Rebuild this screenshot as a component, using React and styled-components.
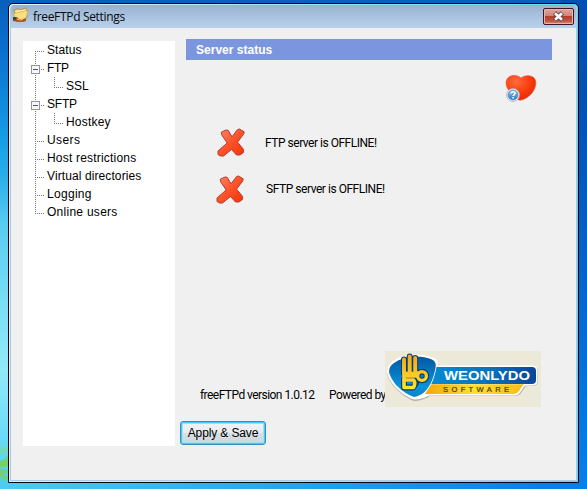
import React from "react";
import styled, { createGlobalStyle } from "styled-components";

const GlobalStyle = createGlobalStyle`
  * { box-sizing: border-box; }
  html, body { margin: 0; padding: 0; overflow: hidden; }
`;

const Desktop = styled.main`
  position: relative;
  width: 587px;
  height: 489px;
  padding: 3px 0 0 8px;
  overflow: hidden;
  background:
    linear-gradient(to right, transparent 0 560px, #0050b4 561px) 0 0 / 100% 60px no-repeat,
    linear-gradient(to bottom, #0651ac 0, #0253b5 110px, #0367cf 290px, #0581ea 489px) 100% 0 / 12px 100% no-repeat,
    linear-gradient(to right, transparent 0, #0582e9 540px) 0 100% / 100% 7px no-repeat,
    linear-gradient(to bottom, #0860bd 0, #0b6fcd 50px, #1599e2 130px, #28aee9 175px, #59ccf1 225px, #7cdff6 310px, #91e9f8 370px, #6edcf7 430px, #4accf5 489px);
`;

const Leaves = styled.svg`
  position: absolute;
  left: 0;
  top: 438px;
`;

const Window = styled.section`
  position: relative;
  width: 571px;
  height: 480px;
  border: 1px solid #05080d;
  border-radius: 5px 5px 0 0;
  background: linear-gradient(to right, #e4f3fb, #64d5ef);
  padding: 1px;
`;

const Frame = styled.div`
  height: 476px;
  border: 1px solid #a9caeb;
  border-top: 0;
  border-radius: 4px 4px 0 0;
  background: #f0f0f0;
  overflow: hidden;
`;

const TitleBar = styled.header`
  height: 23px;
  display: flex;
  align-items: flex-start;
  padding: 2px 2px 0 1px;
  background: linear-gradient(#97b2d0, #a7c1dd 45%, #b9d1ea);
`;

const Title = styled.h1`
  flex: 1;
  margin: 2px 0 0 4px;
  font: 12px/16px "Open Sans", "Noto Sans", sans-serif;
  letter-spacing: -0.33px;
  color: #080808;
`;

const CloseButton = styled.button`
  width: 31px;
  height: 17px;
  margin-top: 1px;
  padding: 0;
  display: grid;
  place-items: center;
  border: 1px solid #431422;
  border-radius: 2px;
  background: linear-gradient(#dfa69d 0, #cf8277 48%, #b43f2d 50%, #bd4f3c 75%, #d58b75);
  box-shadow: inset 0 0 0 1px #e6b5ad;
`;

const Body = styled.div`
  display: flex;
  padding: 13px 24px 0 12px;
`;

const Tree = styled.nav`
  width: 152px;
  height: 405px;
  padding-left: 8px;
  background: #fff;
`;

const TreeRow = styled.div`
  height: 18px;
  display: flex;
`;

const TreeLabel = styled.span`
  font: 12px/18px "Liberation Sans", Arial, sans-serif;
  letter-spacing: ${(p) => p.$track || 0}px;
  color: #000;
  white-space: nowrap;
`;

const Panel = styled.section`
  width: 366px;
  margin-left: 11px;
`;

const Heading = styled.h2`
  height: 21px;
  margin: -2px 0 0;
  padding-left: 10px;
  background: #7b96df;
  color: #fff;
  font: bold 12px/22px "Liberation Sans", Arial, sans-serif;
  letter-spacing: 0.02px;
`;

const HeartRow = styled.div`
  height: 68px;
  display: flex;
  justify-content: flex-end;
  padding: 14px 15px 0 0;
`;

const StatusRow = styled.div`
  height: 47px;
  display: flex;
  padding-left: ${(p) => p.$indent}px;
`;

const SmallText = styled.span`
  display: block;
  width: ${(p) => p.$width}px;
  margin-left: ${(p) => p.$left || 0}px;
  margin-top: ${(p) => p.$top || 0}px;
  flex: none;
  font: 12px/14px Roboto, "Liberation Sans", sans-serif;
  letter-spacing: ${(p) => p.$track || 0}px;
  white-space: nowrap;
  color: #000;
`;

const Footer = styled.footer`
  height: 56px;
  margin-top: 129px;
  display: flex;
  padding-left: 14px;
`;

const Banner = styled.div`
  width: 156px;
  height: 56px;
  flex: none;
  background: #ece9d8;
`;

const ApplyButton = styled.button`
  display: block;
  width: 86px;
  height: 24px;
  margin: 14px 0 0 -6px;
  padding: 0;
  border: 1px solid #3c8fc0;
  border-radius: 3px;
  background: linear-gradient(#f1f4f6 0, #e8ecef 48%, #d6dfe4 52%, #cdd8de 100%);
  box-shadow: inset 0 0 0 1px #3fcbf7, inset 0 0 0 2px #a9def0;
  font: 12px/20px "Liberation Sans", Arial, sans-serif;
  letter-spacing: -0.12px;
  color: #000;
`;

const dots = { stroke: "#777", strokeWidth: 1, strokeDasharray: "1 1" };

function Branch({ kind, first, last }) {
  const child = kind === "child";
  const box = kind === "box";
  return (
    <svg width={child ? 35 : 16} height="18" shapeRendering="crispEdges">
      {!last && <path d={`M4.5 ${first ? 10 : 0}V18`} {...dots} />}
      {last && <path d="M4.5 0V11" {...dots} />}
      {child ? (
        <path d="M23.5 0V10M23 10.5H33" {...dots} />
      ) : (
        <path d="M4 10.5H14" {...dots} />
      )}
      {box && (
        <g>
          <rect x="0.5" y="6.5" width="8" height="8" rx="1" fill="#f7f7f7" stroke="#959595" />
          <path d="M2 10.5H7" stroke="#4055a2" />
        </g>
      )}
    </svg>
  );
}

const nodes = [
  { label: "Status", kind: "leaf", track: 0.1 },
  { label: "FTP", kind: "box", track: -0.3 },
  { label: "SSL", kind: "child", track: 0 },
  { label: "SFTP", kind: "box", track: -0.2 },
  { label: "Hostkey", kind: "child", track: 0.2 },
  { label: "Users", kind: "leaf", track: 0.4 },
  { label: "Host restrictions", kind: "leaf", track: 0.2 },
  { label: "Virtual directories", kind: "leaf", track: 0.1 },
  { label: "Logging", kind: "leaf", track: 0.3 },
  { label: "Online users", kind: "leaf", track: 0.27 },
];

function FolderIcon() {
  return (
    <svg width="17" height="17" viewBox="0 0 17 17">
      <path d="M2 3L6 1.5L8 3L14 .8L15 11L4 14Z" fill="#efc954" stroke="#a17c22" strokeWidth=".7" />
      <path d="M3 4L14 2.2L14 4L4 6Z" fill="#fff6c0" />
      <path d="M1.5 6.5L12 4L16 3.5L14 12L4 14Z" fill="#f9df7d" stroke="#c79b36" strokeWidth=".6" />
      <path d="M1 10H5L7 12H11L14 11V14L11 15H6L1 14Z" fill="#a75724" />
      <path d="M1 10H4V13H1Z" fill="#4d4034" />
      <path d="M5 12L8 13L11 12.5" stroke="#edbc87" fill="none" />
    </svg>
  );
}

function CloseIcon() {
  return (
    <svg width="13" height="11" viewBox="0 0 13 11">
      <path d="M2.6 1.9L10.4 9.1M10.4 1.9L2.6 9.1" stroke="#55434c" strokeWidth="4.6" />
      <path d="M3 2.3L10 8.7M10 2.3L3 8.7" stroke="#f7f7f7" strokeWidth="2.8" />
    </svg>
  );
}

function HeartIcon() {
  return (
    <svg width="32" height="29" viewBox="0 0 32 29">
      <defs>
        <radialGradient id="heart" cx=".35" cy=".25" r=".85">
          <stop offset="0" stopColor="#ff6b3d" />
          <stop offset=".55" stopColor="#fa3b0e" />
          <stop offset="1" stopColor="#df2500" />
        </radialGradient>
        <linearGradient id="help" x2="0" y2="1">
          <stop stopColor="#8cc1ed" />
          <stop offset="1" stopColor="#317bc4" />
        </linearGradient>
      </defs>
      <path d="M16 4.2C13.5 1 6.5 .5 3.4 3.4C-.2 7 .8 12 3.5 16C7 20.5 11 25 15 26.3C20 25.6 24 22.5 27 19C30.5 14.5 32 8.5 29.6 4.6C27 .6 18.8 1 16 4.2Z" fill="url(#heart)" stroke="#e4482a" strokeWidth=".6" />
      <circle cx="8" cy="21" r="6.5" fill="#f0f3f7" stroke="#a5a9af" strokeWidth=".7" />
      <circle cx="8" cy="21" r="5" fill="url(#help)" stroke="#3777b6" strokeWidth=".5" />
      <path d="M6 19.6C6 17 10.1 17.1 10.1 19.3C10.1 20.8 8.1 20.7 8.1 22" fill="none" stroke="#fff" strokeWidth="1.5" />
      <path d="M7.3 23H8.9V24.4H7.3Z" fill="#fff" />
    </svg>
  );
}

function CrossIcon() {
  return (
    <svg width="28" height="29" viewBox="0 0 28 29">
      <defs>
        <linearGradient id="cross" x2="1" y2="1">
          <stop stopColor="#ff8a68" />
          <stop offset=".5" stopColor="#fc5329" />
          <stop offset="1" stopColor="#f03205" />
        </linearGradient>
      </defs>
      <path d="M4.3 4.2L9 2L11.2 2.3L15 8.8L20.6 1.5L22.5 1L27.2 3.8L26.8 5.8L20.6 14.2L26.6 21.5L26.4 24.5L23 27H19.5L14.5 21.5L6.5 28H3.5L1 26.5V23L10.2 15L4.8 7Z" fill="url(#cross)" stroke="#b63b31" strokeWidth="1" strokeLinejoin="round" />
    </svg>
  );
}

function Logo() {
  return (
    <svg width="156" height="56" viewBox="0 0 156 56">
      <defs>
        <linearGradient id="blue"><stop stopColor="#078bd3" /><stop offset=".55" stopColor="#0873bd" /><stop offset="1" stopColor="#0b4698" /></linearGradient>
        <linearGradient id="shield" x2="0" y2="1"><stop stopColor="#0756a2" /><stop offset=".75" stopColor="#0795dc" /><stop offset="1" stopColor="#0784c8" /></linearGradient>
        <linearGradient id="gold"><stop stopColor="#f2a900" /><stop offset=".5" stopColor="#ffdf35" /><stop offset="1" stopColor="#f6bc16" /></linearGradient>
        <linearGradient id="hand" gradientUnits="userSpaceOnUse" x1="0" y1="4" x2="0" y2="38"><stop stopColor="#f5a51c" /><stop offset="1" stopColor="#ffe62a" /></linearGradient>
      </defs>
      <path d="M8 11Q17 5 27 4.5Q40 4 49 8Q54 10 53.5 15H148Q153 15 153 20V30Q153 35 147 35H141L136 42Q134 45 129 45H45Q37 50 29 50Q20 47 10 37Q3 29 2 22Q2 15 8 11Z" fill="#8e91a0" opacity=".65" />
      <path d="M8 10Q17 4 27 3.5Q40 3 49 7Q54 9 53 14.5H148Q152.5 14.5 152.5 19V29.5Q152.5 34.5 147 34.5H140L135.5 41Q133 44.5 129 44.5H44Q37 48.5 29 48.5Q20 46 10 36Q3 28 2 21Q2 14 8 10Z" fill="#fff" />
      <path d="M48 16H147Q151 16 151 20V29Q151 33 147 33H44Z" fill="url(#blue)" />
      <path d="M46 33.2H139Q136 36 134 40Q132 43 129 43H40Z" fill="url(#gold)" />
      <path d="M9 12Q18 6 28 5.5Q39 5 47 8.5Q52 11 50.5 17Q48 30 43 37Q37 45 29 46Q20 43 11 34Q5 26 4 21Q4 15 9 12Z" fill="url(#shield)" stroke="#fff" strokeWidth="1.6" paintOrder="stroke" />
      <g stroke="#073f72" fill="none" strokeLinejoin="round" strokeLinecap="round">
        <path d="M19 22V8.5M24.7 22V5.5M30.2 22V7" strokeWidth="6" />
        <path d="M19 22H30L33 22M19 28H28L31 32L28 36.5H19Z" strokeWidth="6" />
        <circle cx="37" cy="25" r="4.5" strokeWidth="5.5" />
      </g>
      <g stroke="url(#hand)" fill="none" strokeLinejoin="round" strokeLinecap="round">
        <path d="M19.01 22L19 8.5M24.71 22L24.7 5.5M30.21 22L30.2 7" strokeWidth="3.9" />
        <path d="M19 22.2L30 22.6L33 22M19 29H28.5Q31 32 28.5 36.5H19Z" strokeWidth="3.6" />
        <path d="M19 23L19.01 29" strokeWidth="3.6" />
        <path d="M20 25L32 25.01" strokeWidth="3.6" />
        <circle cx="37" cy="25" r="4.4" strokeWidth="3.4" />
      </g>
      <text x="59" y="29" textLength="86" lengthAdjust="spacingAndGlyphs" fontFamily="Liberation Sans, sans-serif" fontWeight="700" fontSize="12" fill="#fff">WEONLYDO</text>
      <text x="58" y="41" textLength="66" lengthAdjust="spacing" fontFamily="Liberation Sans, sans-serif" fontSize="7.5" fill="#493917" stroke="#493917" strokeWidth=".2">SOFTWARE</text>
    </svg>
  );
}

export default function App() {
  return (
    <Desktop>
      <GlobalStyle />
      <Leaves width="8" height="46" viewBox="0 0 8 46">
        <path d="M0 6L2 10L3 6L4 12L8 7V13L3 17L0 14Z" fill="#7fdb8e" opacity=".6" />
        <path d="M0 23L5 21L8 17V27L5 29H0ZM0 31H8V35L3 35L8 39V43L4 39L5 46L1 38L0 40Z" fill="#78cf62" opacity=".9" />
      </Leaves>
      <Window>
        <Frame>
          <TitleBar>
            <FolderIcon />
            <Title>freeFTPd Settings</Title>
            <CloseButton aria-label="Close"><CloseIcon /></CloseButton>
          </TitleBar>
          <Body>
            <Tree>
              {nodes.map((node, i) => (
                <TreeRow key={node.label}>
                  <Branch kind={node.kind} first={i === 0} last={i === nodes.length - 1} />
                  <TreeLabel $track={node.track}>{node.label}</TreeLabel>
                </TreeRow>
              ))}
            </Tree>
            <Panel>
              <Heading>Server status</Heading>
              <HeartRow><HeartIcon /></HeartRow>
              <StatusRow $indent={31}>
                <CrossIcon />
                <SmallText $left={20} $top={8} $width={115} $track={-0.48}>FTP server is OFFLINE!</SmallText>
              </StatusRow>
              <StatusRow $indent={30}>
                <CrossIcon />
                <SmallText $left={22} $top={7} $width={120} $track={-0.46}>SFTP server is OFFLINE!</SmallText>
              </StatusRow>
              <Footer>
                <SmallText $top={37} $width={129} $track={-0.55}>freeFTPd version 1.0.12</SmallText>
                <SmallText $top={37} $width={56} $track={-0.55}>Powered by</SmallText>
                <Banner><Logo /></Banner>
              </Footer>
              <ApplyButton>Apply &amp; Save</ApplyButton>
            </Panel>
          </Body>
        </Frame>
      </Window>
    </Desktop>
  );
}
